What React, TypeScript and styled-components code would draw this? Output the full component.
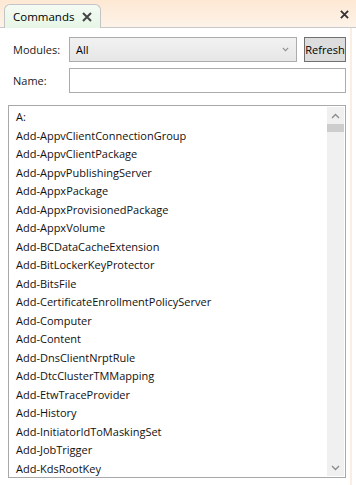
import React from 'react'
import styled, { createGlobalStyle } from 'styled-components'

const GlobalStyle = createGlobalStyle`
    html, body {
        margin: 0;
        padding: 0;
        background: #ffffff;
    }
    body {
        font-family: 'Segoe UI', 'Open Sans', 'Noto Sans', sans-serif;
        font-size: 11px;
        color: #000000;
    }
`

const Window = styled.div`
    width: 356px;
    height: 485px;
    display: flex;
    flex-direction: column;
    overflow: hidden;
    background: #ffffff;
`

const TabStrip = styled.div`
    height: 28px;
    box-sizing: border-box;
    display: flex;
    align-items: flex-end;
    padding-left: 4px;
    padding-right: 6px;
    background: linear-gradient(#fde8d3, #fdf3e9);
    border-bottom: 1px solid #c9c9c9;
`

const Tab = styled.div`
    height: 24px;
    box-sizing: border-box;
    margin-bottom: -1px;
    display: flex;
    align-items: center;
    gap: 8px;
    padding: 0 8px 0 8px;
    border: 1px solid #c4c4c4;
    border-bottom: none;
    border-radius: 6px 6px 0 0;
    background: linear-gradient(#f4fbf4, #e6f6e6);
    font-size: 11.5px;
`

const Spacer = styled.div`
    flex: 1;
`

const CloseButton = styled.div`
    width: 12px;
    height: 24px;
    display: flex;
    align-items: center;
    justify-content: center;
    margin-bottom: 1px;
`

const Body = styled.div`
    flex: 1;
    display: flex;
    flex-direction: column;
    gap: 6px;
    padding: 9px 4px 7px 8px;
    border-right: 2px solid #fbeee0;
    margin-right: 4px;
    min-height: 0;
`

const FormRow = styled.div`
    display: flex;
    align-items: center;
    gap: 7px;
`

const Label = styled.span`
    width: 54px;
    padding-left: 5px;
    box-sizing: border-box;
    font-size: 11px;
    color: #1a1a1a;
`

const Combo = styled.div`
    flex: 1;
    height: 25px;
    box-sizing: border-box;
    display: flex;
    align-items: center;
    padding: 0 7px 0 6px;
    border: 1px solid #acacac;
    background: linear-gradient(#f2f2f2, #e6e6e6);
    font-size: 11px;
`

const RefreshButton = styled.div`
    width: 42px;
    height: 25px;
    box-sizing: border-box;
    display: flex;
    align-items: center;
    justify-content: center;
    border: 1px solid #707070;
    background: #dddddd;
    font-size: 11px;
`

const TextInput = styled.div`
    flex: 1;
    height: 25px;
    box-sizing: border-box;
    border: 1px solid #acacac;
    background: #ffffff;
`

const ListBox = styled.div`
    margin-top: 6px;
    flex: 1;
    display: flex;
    border: 1px solid #a8a8a8;
    min-height: 0;
    overflow: hidden;
`

const Items = styled.div`
    flex: 1;
    padding: 2px 0 0 7px;
    overflow: hidden;
`

const Item = styled.div`
    height: 18.5px;
    line-height: 18.5px;
    white-space: nowrap;
    font-size: 11px;
    color: #111111;
`

const ScrollBar = styled.div`
    width: 17px;
    margin: 1px 1px 1px 0;
    display: flex;
    flex-direction: column;
    align-items: stretch;
    background: #f0f0f0;
`

const ScrollArrow = styled.div`
    height: 17px;
    display: flex;
    align-items: center;
    justify-content: center;
`

const Thumb = styled.div`
    height: 8px;
    background: #cdcdcd;
`

const Track = styled.div`
    flex: 1;
`

const Cross = ({ size, color }: { size: number; color: string }) => (
    <svg width={size} height={size} viewBox='0 0 10 10'>
        <path d='M1 1 L9 9 M9 1 L1 9' stroke={color} strokeWidth='2' strokeLinecap='butt' />
    </svg>
)

const Chevron = ({ up, small }: { up?: boolean; small?: boolean }) => (
    <svg width={small ? 7 : 9} height={small ? 5 : 6} viewBox='0 0 9 6'>
        <path
            d={up ? 'M1 5 L4.5 1.5 L8 5' : 'M1 1 L4.5 4.5 L8 1'}
            stroke='#8a8a8a'
            strokeWidth='1.3'
            fill='none'
        />
    </svg>
)

const commands = [
    'A:',
    'Add-AppvClientConnectionGroup',
    'Add-AppvClientPackage',
    'Add-AppvPublishingServer',
    'Add-AppxPackage',
    'Add-AppxProvisionedPackage',
    'Add-AppxVolume',
    'Add-BCDataCacheExtension',
    'Add-BitLockerKeyProtector',
    'Add-BitsFile',
    'Add-CertificateEnrollmentPolicyServer',
    'Add-Computer',
    'Add-Content',
    'Add-DnsClientNrptRule',
    'Add-DtcClusterTMMapping',
    'Add-EtwTraceProvider',
    'Add-History',
    'Add-InitiatorIdToMaskingSet',
    'Add-JobTrigger',
    'Add-KdsRootKey',
]

const App = () => {
    return (
        <>
            <GlobalStyle />
            <Window>
                <TabStrip>
                    <Tab>
                        Commands
                        <Cross size={10} color='#444444' />
                    </Tab>
                    <Spacer />
                    <CloseButton>
                        <Cross size={9} color='#333333' />
                    </CloseButton>
                </TabStrip>
                <Body>
                    <FormRow>
                        <Label>Modules:</Label>
                        <Combo>
                            All
                            <Spacer />
                            <Chevron small />
                        </Combo>
                        <RefreshButton>Refresh</RefreshButton>
                    </FormRow>
                    <FormRow>
                        <Label>Name:</Label>
                        <TextInput />
                    </FormRow>
                    <ListBox>
                        <Items>
                            {commands.map((name, index) => (
                                <Item key={index}>{name}</Item>
                            ))}
                        </Items>
                        <ScrollBar>
                            <ScrollArrow>
                                <Chevron up />
                            </ScrollArrow>
                            <Thumb />
                            <Track />
                            <ScrollArrow>
                                <Chevron />
                            </ScrollArrow>
                        </ScrollBar>
                    </ListBox>
                </Body>
            </Window>
        </>
    )
}

export default App
